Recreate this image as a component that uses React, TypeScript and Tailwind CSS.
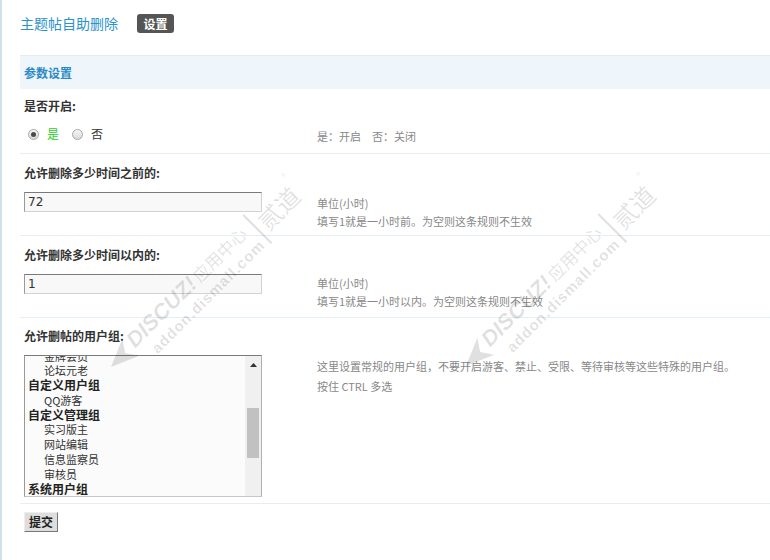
import React from "react";

function Radio({ checked }: { checked?: boolean }) {
  return (
    <span className="flex h-[11px] w-[11px] shrink-0 items-center justify-center rounded-full border border-[#a8a8a8] bg-[linear-gradient(#f6f6f6,#d9d9d9)]">
      {checked && <span className="h-[5px] w-[5px] rounded-full bg-[#4a4a4a]" />}
    </span>
  );
}

function TextBox({ value }: { value: string }) {
  return (
    <input
      defaultValue={value}
      className="block h-[20px] w-[238px] border border-t-[#7a7a7a] border-l-[#999] border-r-[#d2d2d2] border-b-[#d2d2d2] bg-[#f8f8f8] pl-[3px] font-['DejaVu_Sans',sans-serif] text-[12px] text-[#333] outline-none"
    />
  );
}

function Group({ children }: { children: React.ReactNode }) {
  return <div className="h-[14.8px] whitespace-nowrap text-[12px] font-bold leading-[14.8px] text-[#222]">{children}</div>;
}
function Opt({ children }: { children: React.ReactNode }) {
  return <div className="h-[14.8px] whitespace-nowrap pl-[16px] text-[11px] leading-[14.8px] text-[#333]">{children}</div>;
}

function Watermark({ pos }: { pos: string }) {
  return (
    <div className={`pointer-events-none absolute z-10 flex origin-top-left -rotate-45 items-center text-black/[0.12] ${pos}`}>
      <svg width="28" height="45" viewBox="0 0 28 45" className="shrink-0">
        <polygon points="0,17 28,5 20,17 28,29" fill="currentColor" />
      </svg>
      <div className="ml-[2px] flex flex-col">
        <div className="flex h-[27px] items-center">
          <span className="font-['Liberation_Sans',sans-serif] text-[22px] font-bold italic leading-[27px]">DISCUZ!</span>
          <span className="ml-[3px] text-[17px] leading-[27px]">应用中心</span>
        </div>
        <div className="h-[18px] pl-[12px] font-['Liberation_Sans',sans-serif] text-[15px] font-bold leading-[18px] tracking-[1px]">addon.dismall.com</div>
      </div>
      <div className="mx-[5px] h-[40px] w-[2px] bg-current" />
      <span className="text-[24px] leading-[30px]">贰道</span>
      <span className="ml-[1px] self-start text-[9px] leading-[10px]">®</span>
    </div>
  );
}

export default function App() {
  return (
    <div className="relative h-[560px] w-[770px] overflow-hidden border-l-2 border-[#d0e1eb] bg-white pl-[18px] font-['Noto_Sans_CJK_SC',sans-serif] text-[#333]">
      {/* title */}
      <div className="mt-[14px] flex h-[19px] items-center">
        <span className="text-[14px] leading-[19px] text-[#2a93cc]">主题帖自助删除</span>
        <span className="ml-[19px] flex h-[19px] items-center rounded-[3px] bg-[#555] px-[6.5px] text-[12px] font-bold leading-[19px] text-white">设置</span>
      </div>

      {/* header band */}
      <div className="mt-[22px] flex h-[34px] items-center border-t border-[#e2ecf5] bg-[#eef5fb] pl-[4px] text-[12px] font-bold text-[#2b89c6]">
        参数设置
      </div>

      {/* section 1 */}
      <div className="border-b border-[#e5eef6]">
        <div className="flex h-[34px] items-center pl-[4px] text-[12px] font-bold">是否开启:</div>
        <div className="flex h-[30px]">
          <div className="w-[297px] pl-[4px]">
            <div className="mt-[5px] flex h-[12px] items-center text-[12px] leading-[12px]">
              <span className="ml-[4px]"><Radio checked /></span>
              <span className="ml-[8px] text-[#2ad12a]">是</span>
              <span className="ml-[13px]"><Radio /></span>
              <span className="ml-[8px] text-[#333]">否</span>
            </div>
          </div>
          <div className="pt-[4px] text-[11px] leading-[19px] text-[#888]">是：开启　否：关闭</div>
        </div>
      </div>

      {/* section 2 */}
      <div className="border-b border-[#e5eef6]">
        <div className="flex h-[38px] items-center pl-[4px] text-[12px] font-bold">允许删除多少时间之前的:</div>
        <div className="flex h-[43px]">
          <div className="w-[297px] pl-[4px]">
            <TextBox value="72" />
          </div>
          <div className="pt-[2px] text-[11px] leading-[18px] text-[#888]">
            <div>单位(小时)</div>
            <div>填写1就是一小时前。为空则这条规则不生效</div>
          </div>
        </div>
      </div>

      {/* section 3 */}
      <div className="border-b border-[#e5eef6]">
        <div className="flex h-[38px] items-center pl-[4px] text-[12px] font-bold">允许删除多少时间以内的:</div>
        <div className="flex h-[43px]">
          <div className="w-[297px] pl-[4px]">
            <TextBox value="1" />
          </div>
          <div className="text-[11px] leading-[18px] text-[#888]">
            <div>单位(小时)</div>
            <div>填写1就是一小时以内。为空则这条规则不生效</div>
          </div>
        </div>
      </div>

      {/* section 4 */}
      <div className="border-b border-[#e5eef6]">
        <div className="flex h-[36px] items-center pl-[4px] text-[12px] font-bold">允许删帖的用户组:</div>
        <div className="flex h-[149px]">
          <div className="w-[297px] pl-[4px]">
            <div className="mt-[1px] flex h-[142px] w-[238px] border border-t-[#7a7a7a] border-l-[#999] border-r-[#b0b0b0] border-b-[#c6c6c6] bg-[#fbfbfb]">
              <div className="flex-1 overflow-hidden pl-[3px]">
                <div className="-mt-[7.5px]">
                  <Opt>金牌会员</Opt>
                  <Opt>论坛元老</Opt>
                  <Group>自定义用户组</Group>
                  <Opt>QQ游客</Opt>
                  <Group>自定义管理组</Group>
                  <Opt>实习版主</Opt>
                  <Opt>网站编辑</Opt>
                  <Opt>信息监察员</Opt>
                  <Opt>审核员</Opt>
                  <Group>系统用户组</Group>
                </div>
              </div>
              <div className="flex w-[16px] shrink-0 flex-col bg-[#f0f0f0]">
                <div className="flex h-[17px] items-center justify-center">
                  <svg width="7" height="4" viewBox="0 0 7 4">
                    <polygon points="3.5,0 7,4 0,4" fill="#333" />
                  </svg>
                </div>
                <div className="mx-[2px] mt-[35px] h-[50px] bg-[#c1c1c1]" />
              </div>
            </div>
          </div>
          <div className="pt-[2px] text-[11px] leading-[20px] text-[#888]">
            <div>这里设置常规的用户组，不要开启游客、禁止、受限、等待审核等这些特殊的用户组。</div>
            <div>按住 CTRL 多选</div>
          </div>
        </div>
      </div>

      {/* submit */}
      <div className="pl-[4px]">
        <button className="mt-[8px] flex h-[20px] w-[34px] items-center justify-center border border-t-[#eee] border-l-[#eee] border-r-[#777] border-b-[#777] bg-[#dedede] text-[12px] font-bold leading-none text-[#222]">
          提交
        </button>
      </div>

      <Watermark pos="left-[97px] top-[355px]" />
      <Watermark pos="left-[452px] top-[354px]" />
    </div>
  );
}
